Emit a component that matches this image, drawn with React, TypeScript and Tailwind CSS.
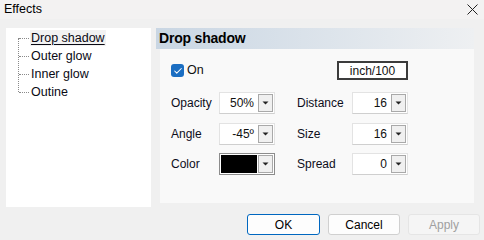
import { Check } from 'lucide-react';

const font = { fontFamily: '"Liberation Sans", Arial, sans-serif' };

function Spin({ value }: { value: string }) {
  return (
    <div className="flex h-[22px] w-[56px] items-center justify-end border border-[#e3e3e3] border-b-[#cfcfcf] bg-white pr-[1px]">
      <span className="mr-[4px] text-[12px] text-[#111]">{value}</span>
      <DropBtn />
    </div>
  );
}

function DropBtn() {
  return (
    <div className="flex h-[18px] w-[15px] items-center justify-center border border-[#a9a9a9] bg-[#f0f0f0]">
      <svg width="7" height="4" viewBox="0 0 7 4">
        <path d="M0.5 0.5h6L3.5 3.5z" fill="#222" />
      </svg>
    </div>
  );
}

function Label({ children }: { children: string }) {
  return <span className="text-[12px] leading-[22px] text-[#0d0d1a]">{children}</span>;
}

export default function App() {
  const tree = ['Drop shadow', 'Outer glow', 'Inner glow', 'Outine'];
  return (
    <div className="flex h-[240px] w-[484px] flex-col overflow-hidden bg-[#f0f0f0]" style={font}>
      <div className="flex h-[19px] items-center justify-between bg-[#f3f2f2] pl-[4px] pr-[6px]">
        <span className="text-[12.5px] text-black">Effects</span>
        <svg width="11" height="11" viewBox="0 0 11 11">
          <path d="M0.5 0.5L10.5 10.5M10.5 0.5L0.5 10.5" stroke="#222" strokeWidth="1" />
        </svg>
      </div>

      <div className="mt-[9px] flex pl-[6px]">
        <div className="relative h-[179px] w-[145px] bg-white pt-[1px]">
          <div className="absolute left-[12px] top-[10px] h-[54px] border-l border-dotted border-[#8a8a8a]" />
          {tree.map((t, i) => (
            <div key={t} className="flex h-[18px] items-center">
              <div className="ml-[13px] w-[10px] border-t border-dotted border-[#8a8a8a]" />
              <span
                className={
                  'ml-[1px] px-[1px] text-[12.5px] leading-[16px] text-[#0a0a14] ' +
                  (i === 0 ? 'bg-[#f2f2f2] underline underline-offset-[2px]' : '')
                }
              >
                {t}
              </span>
            </div>
          ))}
        </div>

        <div className="ml-[5px] flex w-[318px] flex-col">
          <div className="flex h-[21px] items-center bg-gradient-to-r from-[#c9d6e3] to-[#eef0f2] pl-[3px]">
            <span className="text-[14px] font-bold tracking-[-0.2px] text-black">Drop shadow</span>
          </div>
          <div className="ml-[4px] h-[154px] bg-[#f9f9f9] pl-[11px] pt-[12px]">
            <div className="flex h-[19px] w-[237px] items-center">
              <div className="flex h-[13px] w-[13px] items-center justify-center rounded-[3px] bg-[#1b6ec2]">
                <Check size={10} color="white" strokeWidth={2.5} />
              </div>
              <span className="ml-[3px] text-[12.5px] text-[#111]">On</span>
              <div className="ml-auto flex h-[19px] w-[71px] items-center justify-center border-2 border-[#3c3c3c] bg-white text-[12px] text-[#111]">
                inch/100
              </div>
            </div>
            <div className="mt-[12px] grid grid-cols-[48px_56px_22px_55px_56px] gap-y-[8.5px]">
              <Label>Opacity</Label>
              <Spin value="50%" />
              <div />
              <Label>Distance</Label>
              <Spin value="16" />

              <Label>Angle</Label>
              <Spin value="-45º" />
              <div />
              <Label>Size</Label>
              <Spin value="16" />

              <Label>Color</Label>
              <div className="flex h-[22px] w-[56px] items-center border border-[#8c8c8c] bg-white pl-[1px] pr-[1px]">
                <div className="h-[18px] w-[36px] bg-black" />
                <div className="ml-auto">
                  <DropBtn />
                </div>
              </div>
              <div />
              <Label>Spread</Label>
              <Spin value="0" />
            </div>
          </div>
        </div>
      </div>

      <div className="mt-[7px] flex justify-end gap-[8px] pr-[4px]">
        <button className="h-[21px] w-[73px] rounded-[3px] border border-[#0067c0] bg-[#fdfdfd] text-[12px] text-black">
          OK
        </button>
        <button className="h-[21px] w-[72px] rounded-[3px] border border-[#d0d0d0] bg-[#fdfdfd] text-[12px] text-black">
          Cancel
        </button>
        <button className="h-[21px] w-[72px] rounded-[3px] border border-[#e5e5e5] bg-[#f5f5f5] text-[12px] text-[#a0a0a0]">
          Apply
        </button>
      </div>
    </div>
  );
}
